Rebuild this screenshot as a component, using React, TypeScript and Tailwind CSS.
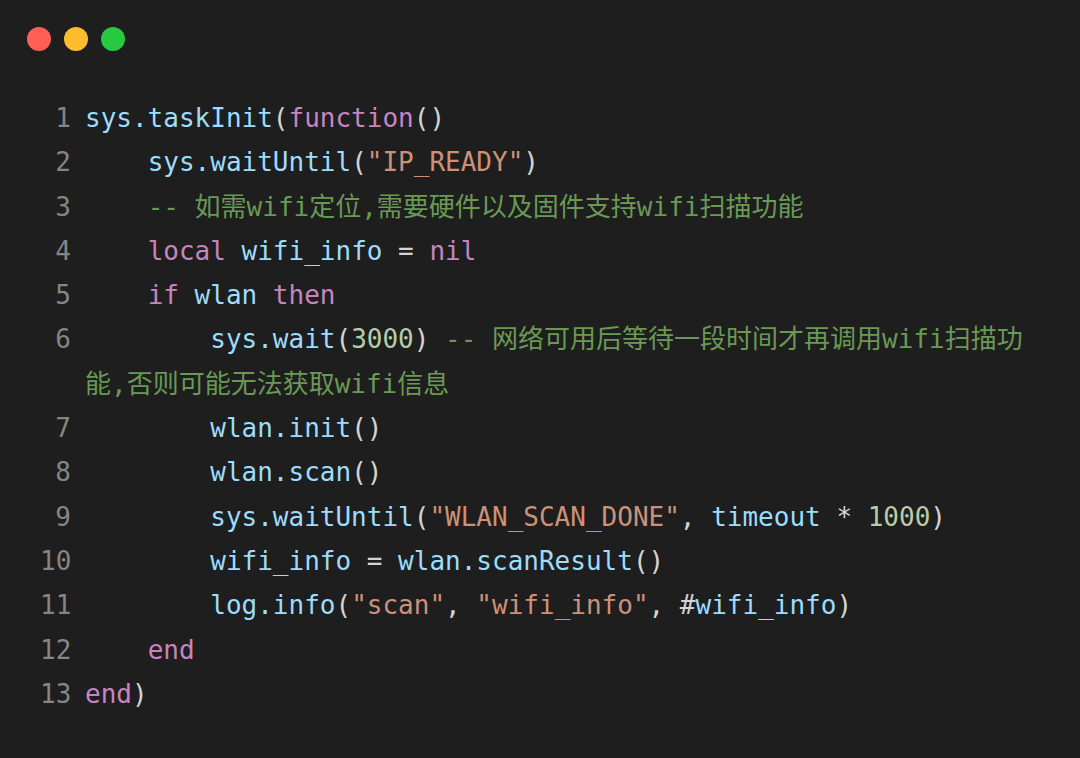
import React from 'react';

type Tok = [string, string];

const C = {
  id: 'text-[#9cdcfe]',
  kw: 'text-[#c586c0]',
  str: 'text-[#ce9178]',
  num: 'text-[#b5cea8]',
  cm: 'text-[#6a9955]',
  p: 'text-[#d4d4d4]',
};

const lines: Tok[][] = [
  [['sys.taskInit', C.id], ['(', C.p], ['function', C.kw], ['()', C.p]],
  [['    sys.waitUntil', C.id], ['(', C.p], ['"IP_READY"', C.str], [')', C.p]],
  [['    -- 如需wifi定位,需要硬件以及固件支持wifi扫描功能', C.cm]],
  [['    ', C.p], ['local', C.kw], [' wifi_info ', C.id], ['=', C.p], [' ', C.p], ['nil', C.kw]],
  [['    ', C.p], ['if', C.kw], [' wlan ', C.id], ['then', C.kw]],
  [
    ['        sys.wait', C.id],
    ['(', C.p],
    ['3000', C.num],
    [')', C.p],
    [' -- 网络可用后等待一段时间才再调用wifi扫描功能,否则可能无法获取wifi信息', C.cm],
  ],
  [['        wlan.init', C.id], ['()', C.p]],
  [['        wlan.scan', C.id], ['()', C.p]],
  [
    ['        sys.waitUntil', C.id],
    ['(', C.p],
    ['"WLAN_SCAN_DONE"', C.str],
    [', ', C.p],
    ['timeout', C.id],
    [' * ', C.p],
    ['1000', C.num],
    [')', C.p],
  ],
  [['        wifi_info ', C.id], ['=', C.p], [' wlan.scanResult', C.id], ['()', C.p]],
  [
    ['        log.info', C.id],
    ['(', C.p],
    ['"scan"', C.str],
    [', ', C.p],
    ['"wifi_info"', C.str],
    [', #', C.p],
    ['wifi_info', C.id],
    [')', C.p],
  ],
  [['    ', C.p], ['end', C.kw]],
  [['end', C.kw], [')', C.p]],
];

export default function App() {
  return (
    <div className="w-[1080px] h-[758px] bg-[#1e1e1e] overflow-hidden">
      {/* window buttons */}
      <div className="flex gap-[13px] pl-[27px] pt-[27px]">
        <span className="w-6 h-6 rounded-full bg-[#ff5f56]" />
        <span className="w-6 h-6 rounded-full bg-[#ffbd2e]" />
        <span className="w-6 h-6 rounded-full bg-[#27c93f]" />
      </div>

      <div
        className="pl-[40px] pr-[45px] pt-[45px] text-[26px] leading-[44.3px]"
        style={{ fontFamily: '"DejaVu Sans Mono", "Noto Sans CJK SC", monospace' }}
      >
        {lines.map((toks, i) => (
          <div key={i} className="flex">
            <span className="w-[31px] shrink-0 text-right text-[#858585]">{i + 1}</span>
            <span className="ml-[14px] flex-1 whitespace-pre-wrap break-words">
              {toks.map(([t, c], j) => (
                <span key={j} className={c}>
                  {t}
                </span>
              ))}
            </span>
          </div>
        ))}
      </div>
    </div>
  );
}
